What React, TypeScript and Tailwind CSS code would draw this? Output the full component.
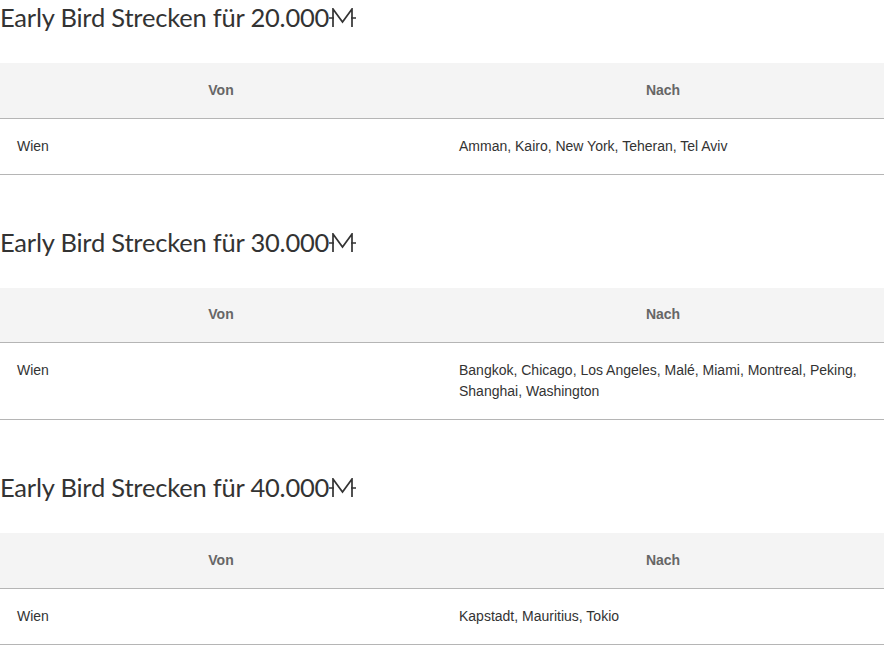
import React from 'react';

const MilesIcon = () => (
  <svg width="27" height="19" viewBox="0 0 27 19" className="inline-block align-baseline" fill="none" stroke="#333" strokeWidth="1.7">
    <path d="M4 19V1l9.5 13L23 1v18" strokeLinejoin="miter" />
    <path d="M0 10h5M22 10h5" />
  </svg>
);

const sections = [
  { miles: '20.000', to: 'Amman, Kairo, New York, Teheran, Tel Aviv' },
  { miles: '30.000', to: 'Bangkok, Chicago, Los Angeles, Malé, Miami, Montreal, Peking, Shanghai, Washington' },
  { miles: '40.000', to: 'Kapstadt, Mauritius, Tokio' },
];

const App = () => {
  return (
    <div className="w-[884px] bg-white pt-[1px] text-[#333]" style={{ fontFamily: '"Liberation Sans", Arial, sans-serif' }}>
      {sections.map((s, i) => (
        <section key={s.miles} className={i > 0 ? 'mt-[51px]' : ''}>
          <h2 className="text-[25.5px] leading-[32px] font-normal tracking-[-0.2px] mb-[30px]" style={{ fontFamily: 'Lato, sans-serif' }}>
            Early Bird Strecken für {s.miles}<MilesIcon />
          </h2>
          <table className="w-full border-collapse text-[14px]">
            <thead>
              <tr className="bg-[#f4f4f4] border-b border-[#b5b5b5]">
                <th className="w-1/2 h-[55px] font-bold text-[#666] text-center">Von</th>
                <th className="w-1/2 h-[55px] font-bold text-[#666] text-center">Nach</th>
              </tr>
            </thead>
            <tbody>
              <tr className="border-b border-[#b5b5b5]">
                <td className="align-top px-[17px] py-[17px] leading-[21px]">Wien</td>
                <td className="align-top px-[17px] py-[17px] leading-[21px]">{s.to}</td>
              </tr>
            </tbody>
          </table>
        </section>
      ))}
    </div>
  );
};

export default App;
